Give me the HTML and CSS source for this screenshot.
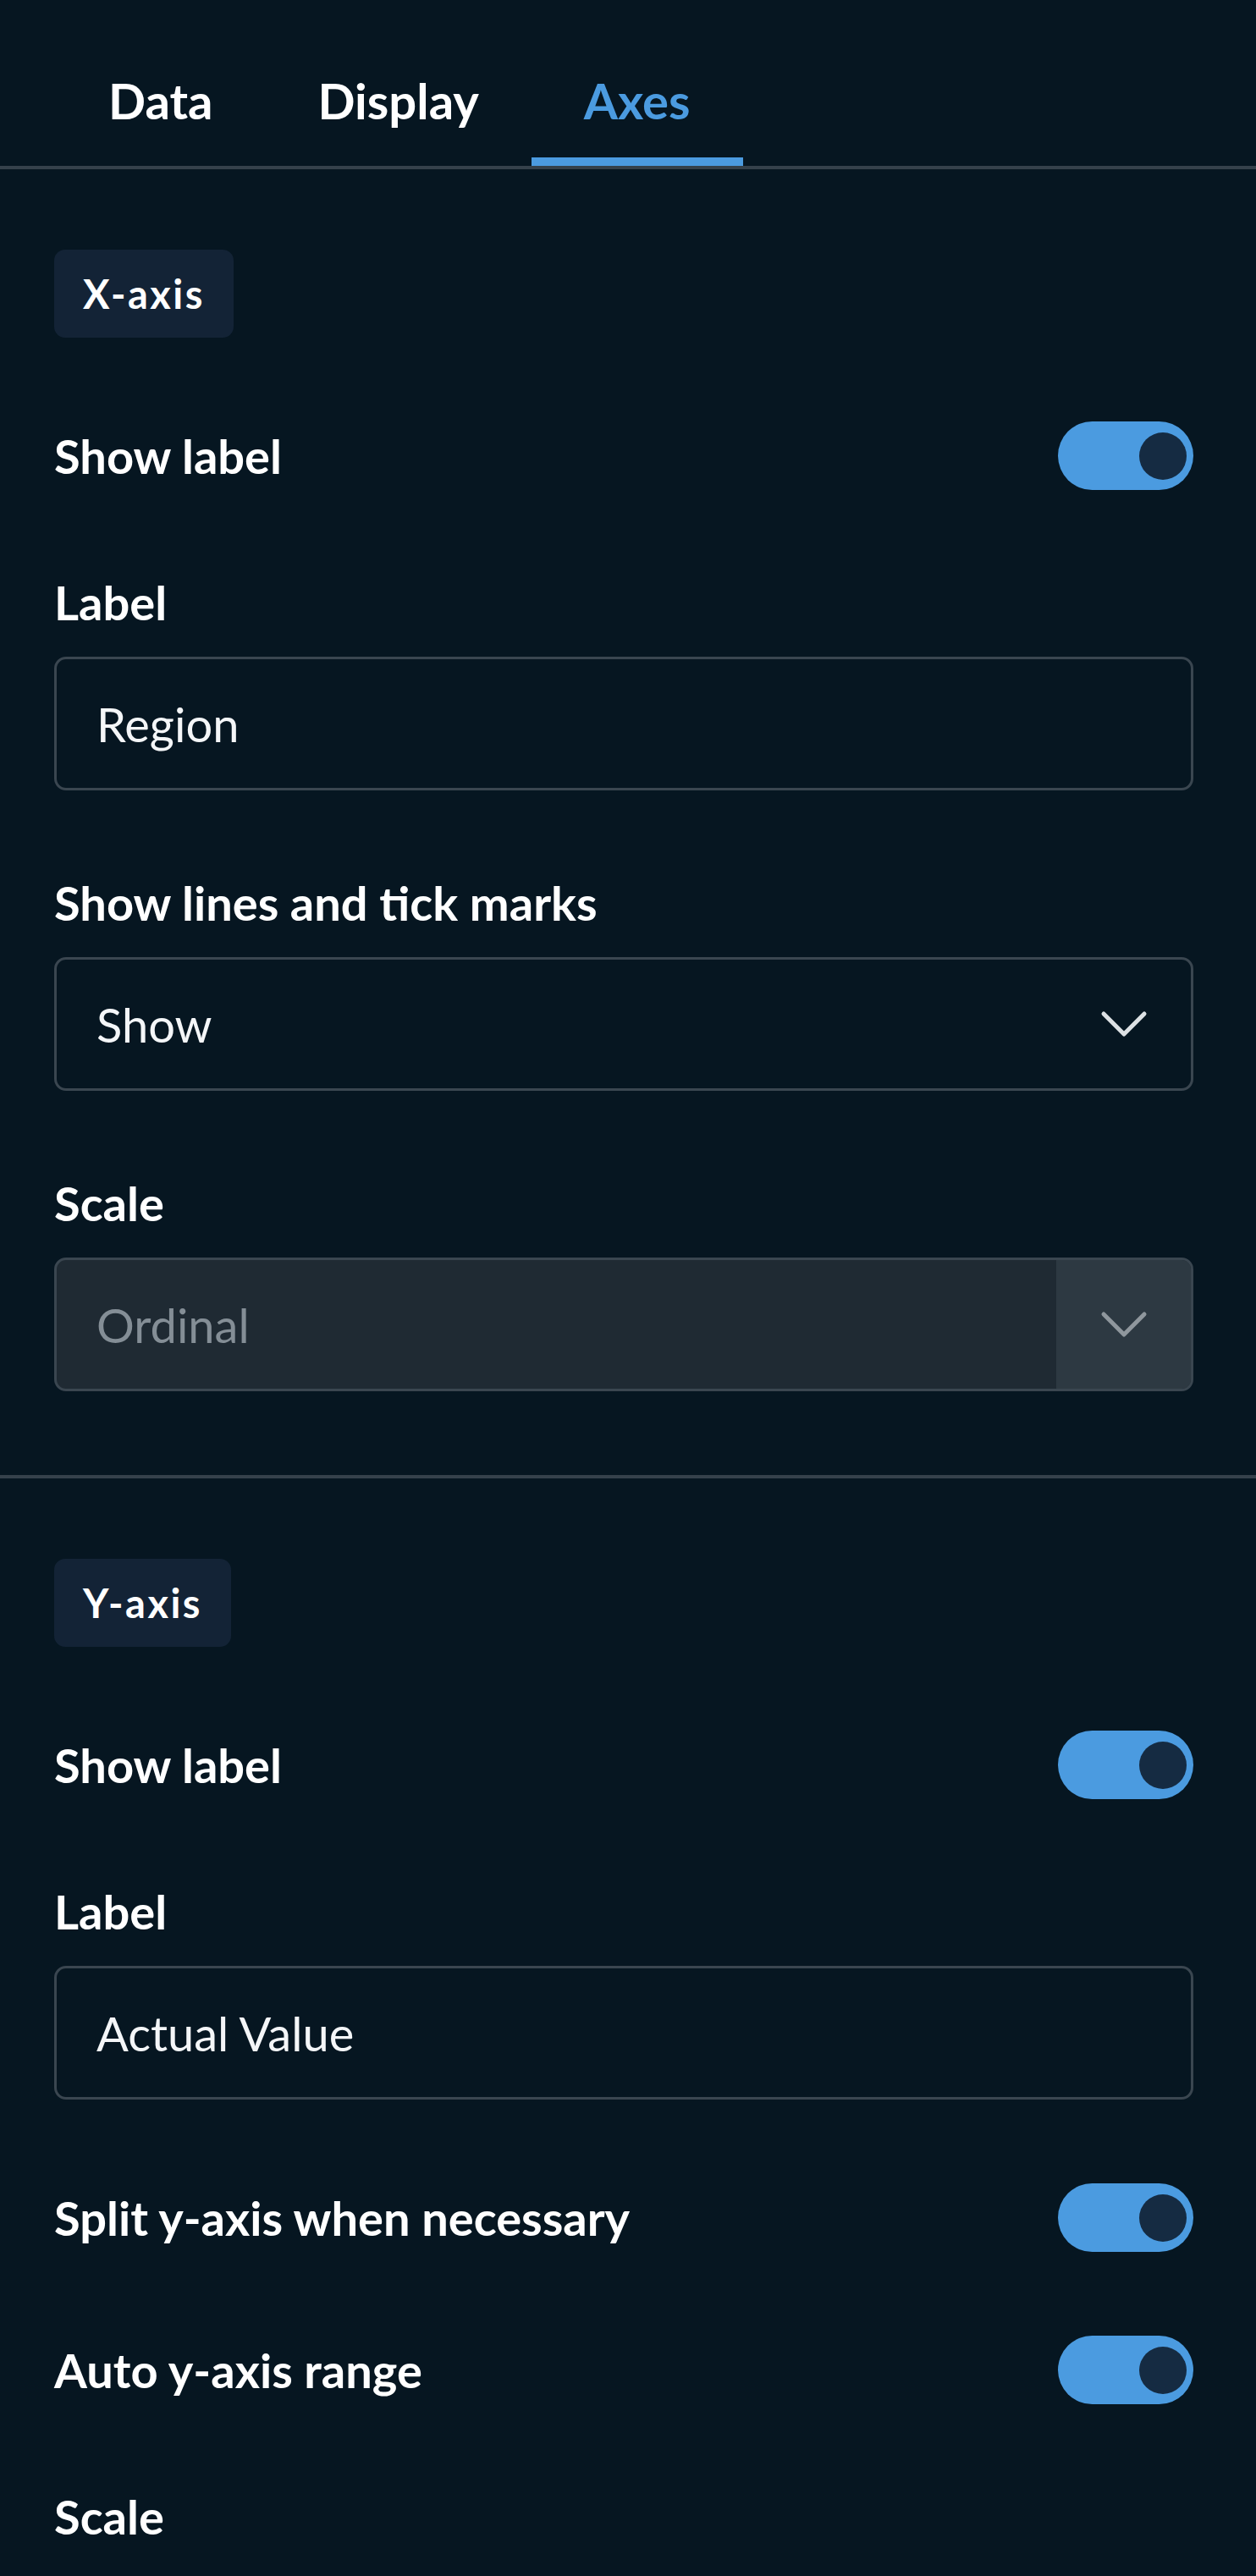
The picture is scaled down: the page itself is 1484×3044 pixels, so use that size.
FILE: index.html
```html
<!DOCTYPE html>
<html lang="en">
<head>
<meta charset="utf-8">
<title>Axes settings</title>
<link rel="stylesheet" href="styles.css">
</head>
<body>
<div class="panel">
  <nav class="tabs">
    <div class="tab">Data</div>
    <div class="tab">Display</div>
    <div class="tab tab--active">Axes</div>
  </nav>

  <section class="section">
    <div class="badge">X-axis</div>
    <div class="row">
      <span class="row-label">Show label</span>
      <span class="toggle"><span class="knob"></span></span>
    </div>
    <div class="field">
      <div class="field-label">Label</div>
      <div class="control"><span class="value">Region</span></div>
    </div>
    <div class="field">
      <div class="field-label">Show lines and tick marks</div>
      <div class="control control--select">
        <span class="value">Show</span>
        <span class="arrow">
          <svg class="chev" viewBox="0 0 56 32" width="56" height="32"><path d="M4 4 L28 28 L52 4"/></svg>
        </span>
      </div>
    </div>
    <div class="field">
      <div class="field-label">Scale</div>
      <div class="control control--select control--disabled">
        <span class="value">Ordinal</span>
        <span class="arrow">
          <svg class="chev" viewBox="0 0 56 32" width="56" height="32"><path d="M4 4 L28 28 L52 4"/></svg>
        </span>
      </div>
    </div>
  </section>

  <section class="section section--divided">
    <div class="badge">Y-axis</div>
    <div class="row">
      <span class="row-label">Show label</span>
      <span class="toggle"><span class="knob"></span></span>
    </div>
    <div class="field">
      <div class="field-label">Label</div>
      <div class="control"><span class="value">Actual Value</span></div>
    </div>
    <div class="row">
      <span class="row-label">Split y-axis when necessary</span>
      <span class="toggle"><span class="knob"></span></span>
    </div>
    <div class="row">
      <span class="row-label">Auto y-axis range</span>
      <span class="toggle"><span class="knob"></span></span>
    </div>
    <div class="field">
      <div class="field-label">Scale</div>
    </div>
  </section>
</div>
</body>
</html>
```

FILE: styles.css
```css
html, body {
  margin: 0;
  padding: 0;
  background: #061621;
}

body {
  font-family: Lato, "Open Sans", "Liberation Sans", sans-serif;
  color: #f4f6f8;
}

.panel {
  background: #061621;
  min-height: 3044px;
}

.tabs {
  display: flex;
  padding-left: 66px;
  border-bottom: 4px solid #35414b;
}

.tab {
  font-weight: 700;
  font-size: 58px;
  line-height: 70px;
  padding: 84px 62px 32px;
  border-bottom: 10px solid transparent;
  color: #ffffff;
}

.tab--active {
  color: #4b9be0;
  border-bottom-color: #4b9be0;
}

.section {
  display: flex;
  flex-direction: column;
  gap: 99px;
  padding: 95px 74px 99px 64px;
}

.section--divided {
  border-top: 4px solid #35414b;
}

.badge {
  align-self: flex-start;
  background: #132336;
  border-radius: 13px;
  padding: 25px 34px;
  font-weight: 700;
  font-size: 47px;
  line-height: 54px;
  letter-spacing: 2.5px;
  color: #ffffff;
}

.row {
  display: flex;
  align-items: center;
  justify-content: space-between;
}

.row-label,
.field-label {
  font-weight: 700;
  font-size: 56px;
  line-height: 67px;
  color: #ffffff;
}

.field-label {
  margin-bottom: 31px;
}

.toggle {
  display: flex;
  align-items: center;
  justify-content: flex-end;
  box-sizing: border-box;
  width: 160px;
  height: 81px;
  padding-right: 8px;
  border-radius: 41px;
  background: #4b9be0;
}

.knob {
  width: 56px;
  height: 56px;
  border-radius: 50%;
  background: #152b42;
}

.control {
  display: flex;
  align-items: center;
  box-sizing: border-box;
  height: 158px;
  border: 3px solid #3a4650;
  border-radius: 14px;
  overflow: hidden;
  font-weight: 400;
  font-size: 56px;
  line-height: 67px;
  color: #f4f6f8;
}

.value {
  flex: 1;
  padding-left: 47px;
}

.arrow {
  display: flex;
  align-items: center;
  justify-content: center;
  width: 159px;
  align-self: stretch;
}

.chev {
  width: 56px;
  height: 32px;
  fill: none;
  stroke: #dde1e4;
  stroke-width: 5;
  stroke-linecap: round;
  stroke-linejoin: round;
}

.control--disabled {
  background: #1f2a33;
  color: #848e96;
}

.control--disabled .arrow {
  background: #2d3942;
}

.control--disabled .chev {
  stroke: #8f979d;
}
```
